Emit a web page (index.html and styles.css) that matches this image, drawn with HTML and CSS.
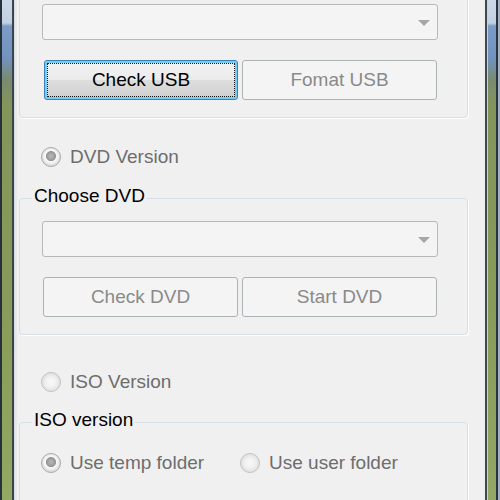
FILE: index.html
```html
<!DOCTYPE html>
<html lang="en">
<head>
<meta charset="utf-8">
<title>USB / DVD / ISO</title>
<link rel="stylesheet" href="styles.css">
</head>
<body>
<div class="window">
  <div class="frame frame-left"></div>
  <div class="client">
    <section class="group group-usb">
      <div class="combo"><span class="combo-arrow"></span></div>
      <div class="btn-row">
        <button class="btn btn-focus" type="button">Check USB</button>
        <button class="btn" type="button" disabled>Fomat USB</button>
      </div>
    </section>

    <label class="radio-row row-dvd"><span class="radio checked"></span><span class="radio-text">DVD Version</span></label>

    <section class="group group-dvd">
      <div class="group-title">Choose DVD</div>
      <div class="combo"><span class="combo-arrow"></span></div>
      <div class="btn-row">
        <button class="btn" type="button" disabled>Check DVD</button>
        <button class="btn" type="button" disabled>Start DVD</button>
      </div>
    </section>

    <label class="radio-row row-iso"><span class="radio"></span><span class="radio-text">ISO Version</span></label>

    <section class="group group-iso">
      <div class="group-title">ISO version</div>
      <div class="radio-line">
        <label class="radio-row opt-first"><span class="radio checked"></span><span class="radio-text">Use temp folder</span></label>
        <label class="radio-row"><span class="radio"></span><span class="radio-text">Use user folder</span></label>
      </div>
    </section>
  </div>
  <div class="frame frame-right"></div>
</div>
</body>
</html>
```

FILE: styles.css
```css
html, body {
  margin: 0;
  padding: 0;
}

body {
  background: #f0f0f0;
  font-family: "Liberation Sans", Arial, sans-serif;
  font-size: 19px;
  overflow: hidden;
}

.window {
  display: flex;
  width: 500px;
  height: 500px;
  overflow: hidden;
}

.frame {
  flex: none;
  background: linear-gradient(to bottom,
    #cbd8e7 0px, #c2d1e3 23px, #7c9cc6 26px, #7293bf 58px,
    #7a8a6e 80px, #84955b 105px, #889b58 300px, #92a863 500px);
}

.frame-left {
  width: 10px;
  border-left: 2px solid #27313c;
  border-right: 2px solid #3a444f;
}

.frame-right {
  width: 11px;
  border-left: 2px solid #3e4853;
  border-right: 2px solid #9fb0c2;
  box-shadow: inset 1px 0 0 #c9d1da, inset -2px 0 0 #2a333c;
}

.client {
  flex: 1;
  min-width: 0;
  background: #f0f0f0;
  border-left: 1px solid #d6dade;
  box-shadow: inset 2px 0 0 #e6e8ea;
  overflow: hidden;
}

/* ---------- group boxes ---------- */
.group {
  margin: 0 17px 0 4px;
  border: 1px solid #d5dfe5;
  border-radius: 4px;
  padding: 0 0 17px 22px;
  box-shadow: 1px 1px 0 #ffffff;
}

.group-usb { margin-top: -19px; }
.group-usb .combo { margin-top: 22px; }
.group-dvd { margin-top: 30px; }
.group-iso { margin-top: 29px; padding-bottom: 60px; }

.group-title {
  width: max-content;
  margin: -14px 0 0 -10px;
  padding: 0 2px;
  line-height: 22px;
  background: #f0f0f0;
  color: #000000;
}

/* ---------- combo ---------- */
.combo {
  box-sizing: border-box;
  width: 396px;
  height: 36px;
  margin-top: 14px;
  border: 1px solid #b5b9bc;
  border-radius: 3px;
  background: #f4f4f4;
  display: flex;
  justify-content: flex-end;
  align-items: center;
  padding: 2px 7px 0 0;
}

.combo-arrow {
  width: 0;
  height: 0;
  border-left: 6px solid transparent;
  border-right: 6px solid transparent;
  border-top: 6px solid #a6a6a6;
}

/* ---------- buttons ---------- */
.btn-row {
  display: flex;
  gap: 4px;
  margin-top: 20px;
  padding-left: 1px;
}

.btn {
  box-sizing: border-box;
  width: 195px;
  height: 40px;
  margin: 0;
  padding: 0;
  border: 1px solid #adb2b5;
  border-radius: 3px;
  background: #f4f4f4;
  color: #8a8a8a;
  font-family: inherit;
  font-size: 19px;
  line-height: 22px;
}

.btn-focus {
  width: 194px;
  margin-left: 1px;
  border-color: #3c7fb1;
  color: #000000;
  background: linear-gradient(to bottom, #f3f3f3 0%, #ebebeb 50%, #dddddd 51%, #d0d0d0 100%);
  box-shadow: inset 0 0 0 2px #74cdf3;
  outline: 1px dotted #111111;
  outline-offset: -4px;
}

/* ---------- radios ---------- */
.radio-row {
  display: flex;
  align-items: center;
  height: 22px;
  color: #6d6d6d;
  line-height: 22px;
}

.row-dvd,
.row-iso {
  margin-left: 26px;
}

.row-dvd { margin-top: 28px; }
.row-iso { margin-top: 36px; }

.radio {
  flex: none;
  box-sizing: border-box;
  width: 20px;
  height: 20px;
  margin-right: 9px;
  border-radius: 50%;
  border: 1px solid #c2c2c2;
  background: radial-gradient(circle at 50% 50%, #f8f8f8 0px, #f1f1f1 5px, #e1e1e1 9px);
}

.radio.checked {
  border-color: #a9a9a9;
  background: radial-gradient(circle at 50% 45%,
    #b9b9b9 0px, #a3a3a3 3px, #939393 4.6px,
    #f7f7f7 5.4px, #f3f3f3 6.8px, #dedede 9px);
}

.radio-line {
  display: flex;
  margin-top: 21px;
  margin-left: -1px;
}

.opt-first {
  width: 199px;
}
```
